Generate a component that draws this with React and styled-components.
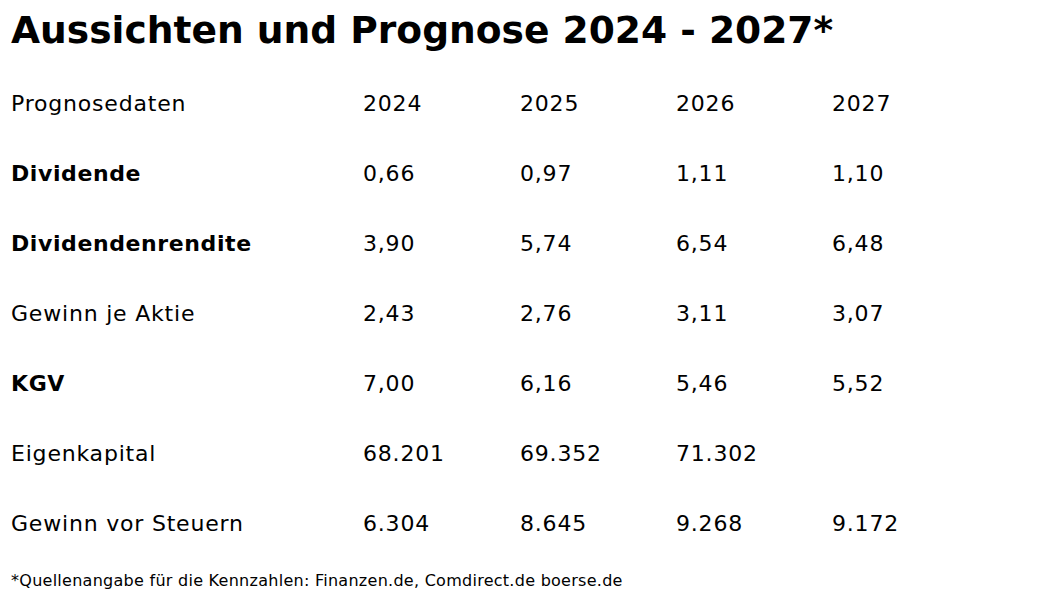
import React from 'react';
import styled, { createGlobalStyle } from 'styled-components';

let GlobalStyle = createGlobalStyle`
  html, body {
    margin: 0;
    padding: 0;
    background: #fff;
  }
  body {
    font-family: 'DejaVu Sans', Verdana, sans-serif;
    color: #000;
  }
`;

let Page = styled.div`
  padding: 6px 10px 0 11px;
`;

let Title = styled.h1`
  margin: 0;
  font-size: 37.6px;
  line-height: 48px;
  font-weight: 700;
`;

let Table = styled.div`
  display: grid;
  grid-template-columns: 352px 157px 156px 156px 156px;
  margin-top: 14px;
`;

let Cell = styled.div`
  height: 70px;
  display: flex;
  align-items: center;
  font-size: 22px;
  letter-spacing: ${props => (props.bold ? '0.6px' : '0.8px')};
  font-weight: ${props => (props.bold ? 700 : 400)};
  white-space: nowrap;
`;

let Note = styled.p`
  margin: 13px 0 0 0;
  font-size: 16px;
  letter-spacing: 0.27px;
  line-height: 20px;
`;

let rows = [
  { label: 'Prognosedaten', values: ['2024', '2025', '2026', '2027'] },
  { label: 'Dividende', bold: true, values: ['0,66', '0,97', '1,11', '1,10'] },
  { label: 'Dividendenrendite', bold: true, values: ['3,90', '5,74', '6,54', '6,48'] },
  { label: 'Gewinn je Aktie', values: ['2,43', '2,76', '3,11', '3,07'] },
  { label: 'KGV', bold: true, values: ['7,00', '6,16', '5,46', '5,52'] },
  { label: 'Eigenkapital', values: ['68.201', '69.352', '71.302', ''] },
  { label: 'Gewinn vor Steuern', values: ['6.304', '8.645', '9.268', '9.172'] },
];

function App() {
  return (
    <>
      <GlobalStyle />
      <Page>
        <Title>Aussichten und Prognose 2024 - 2027*</Title>
        <Table>
          {rows.map(row => (
            <React.Fragment key={row.label}>
              <Cell bold={row.bold}>{row.label}</Cell>
              {row.values.map((v, i) => (
                <Cell key={i}>{v}</Cell>
              ))}
            </React.Fragment>
          ))}
        </Table>
        <Note>*Quellenangabe für die Kennzahlen: Finanzen.de, Comdirect.de boerse.de</Note>
      </Page>
    </>
  );
}

export default App;
